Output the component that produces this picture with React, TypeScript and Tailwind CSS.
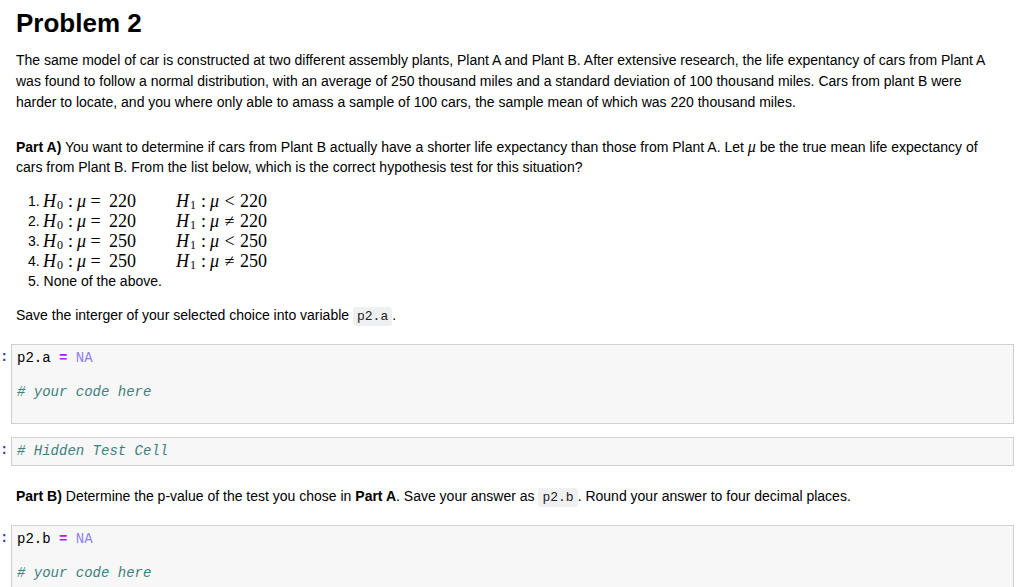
const sans = "font-['Liberation_Sans',Arial,sans-serif]";
const mono = "font-['Liberation_Mono','Courier_New',monospace]";
const serif = "font-['Liberation_Serif','Times_New_Roman',serif]";

function Code({ children }: { children: React.ReactNode }) {
  return (
    <code className={`${mono} rounded-[3px] bg-[#eff0f1] px-[4px] py-[2px] text-[13px] text-[#222]`}>
      {children}
    </code>
  );
}

function Cell({ lines }: { lines: React.ReactNode[] }) {
  return (
    <div className="flex">
      <div className={`${mono} w-[11px] shrink-0 pt-[5px] text-[14px] leading-[17px] font-bold text-[#303f9f]`}>:</div>
      <div className={`${mono} mr-[18px] flex-1 border border-[#cfcfcf] bg-[#f7f7f7] px-[5px] py-[5px] text-[14px] leading-[17px] text-black`}>
        {lines.map((l, i) => (
          <div key={i} className="h-[17px] whitespace-pre">
            {l}
          </div>
        ))}
      </div>
    </div>
  );
}

const Comment = ({ t }: { t: string }) => <span className="italic text-[#408080]">{t}</span>;

function Assign({ name }: { name: string }) {
  return (
    <span>
      {name} <span className="font-bold text-[#aa22ff]">=</span> <span className="text-[#8a80f4]">NA</span>
    </span>
  );
}

// one hypothesis, e.g. H0 : μ = 220
function Hyp({ sub, op, val, opW, valMl }: { sub: string; op: string; val: string; opW: string; valMl: string }) {
  return (
    <span className={`${serif} flex items-center text-[18px] leading-none`}>
      <i className="inline-block w-[14px]">H</i>
      <span className="inline-block w-[7px] translate-y-[4px] text-[12px]">{sub}</span>
      <span className="inline-block w-[13px] text-center">:</span>
      <i className="inline-block w-[9px]">μ</i>
      <span className={`inline-block text-center ${opW}`}>{op}</span>
      <span className={`inline-block ${valMl}`}>{val}</span>
    </span>
  );
}

const choices = [
  ["=", "220", "<", "220"],
  ["=", "220", "≠", "220"],
  ["=", "250", "<", "250"],
  ["=", "250", "≠", "250"],
];

export default function App() {
  return (
    <div className={`${sans} min-h-[587px] w-[1032px] overflow-hidden bg-white text-[14px] text-black`}>
      <div className="pr-[31px] pl-[16px]">
        <h1 className="mt-[10px] text-[26px] leading-[26px] font-bold">Problem 2</h1>
        <p className="mt-[14px] leading-[21px]">
          The same model of car is constructed at two different assembly plants, Plant A and Plant B. After extensive
          research, the life expentancy of cars from Plant A was found to follow a normal distribution, with an average of
          250 thousand miles and a standard deviation of 100 thousand miles. Cars from plant B were harder to locate, and
          you where only able to amass a sample of 100 cars, the sample mean of which was 220 thousand miles.
        </p>
        <p className="mt-[24px] leading-[20px]">
          <b>Part A)</b> You want to determine if cars from Plant B actually have a shorter life expectancy than those from
          Plant A. Let <i className={`${serif} text-[16px]`}>μ</i> be the true mean life expectancy of cars from Plant B.
          From the list below, which is the correct hypothesis test for this situation?
        </p>
        <ol className="mt-[14px] pl-[12px] leading-[20px]">
          {choices.map((c, i) => (
            <li key={i} className="flex h-[20px] items-center">
              <span className="w-[15px] shrink-0">{i + 1}.</span>
              <span className="w-[133px] shrink-0">
                <Hyp sub="0" op={c[0]} val={c[1]} opW="w-[19px]" valMl="ml-[4px]" />
              </span>
              <Hyp sub="1" op={c[2]} val={c[3]} opW="w-[21px]" valMl="ml-0" />
            </li>
          ))}
          <li className="h-[20px]">5. None of the above.</li>
        </ol>
        <p className="mt-[14px] leading-[20px]">
          Save the interger of your selected choice into variable <Code>p2.a</Code>.
        </p>
      </div>
      <div className="mt-[17px]">
        <Cell lines={[<Assign name="p2.a" />, "", <Comment t="# your code here" />, ""]} />
      </div>
      <div className="mt-[13px]">
        <Cell lines={[<Comment t="# Hidden Test Cell" />]} />
      </div>
      <p className="mt-[20px] pr-[31px] pl-[16px] leading-[20px]">
        <b>Part B)</b> Determine the p-value of the test you chose in <b>Part A</b>. Save your answer as <Code>p2.b</Code>.
        Round your answer to four decimal places.
      </p>
      <div className="mt-[17px]">
        <Cell lines={[<Assign name="p2.b" />, "", <Comment t="# your code here" />, ""]} />
      </div>
    </div>
  );
}
